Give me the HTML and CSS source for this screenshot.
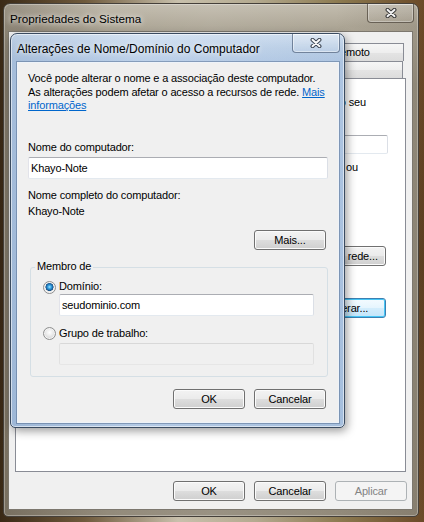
FILE: index.html
```html
<!DOCTYPE html>
<html lang="pt-BR">
<head>
<meta charset="utf-8">
<title>Propriedades do Sistema</title>
<link rel="stylesheet" href="styles.css">
</head>
<body>
<div class="desktop">

  <div class="window outer">
    <div class="titlebar">
      <span class="title">Propriedades do Sistema</span>
      <span class="close">
        <svg width="12" height="10" viewBox="0 0 12 10"><path d="M2.5 1.8 L9.5 8.2 M9.5 1.8 L2.5 8.2" stroke="#3a3a3a" stroke-width="4" stroke-linecap="round"/><path d="M2.5 1.8 L9.5 8.2 M9.5 1.8 L2.5 8.2" stroke="#f4f4f4" stroke-width="2" stroke-linecap="round"/></svg>
      </span>
    </div>
    <div class="client outer-client">
      <div class="tabs">
        <div class="tab-row back">
          <span class="tab"></span>
          <span class="tab"></span>
          <span class="tab last">Remoto</span>
        </div>
        <div class="tab-row front">
          <span class="tab selected"></span>
          <span class="tab"></span>
        </div>
      </div>
      <div class="tab-panel">
        <div class="panel-head">
          <svg class="pc-icon" width="32" height="32" viewBox="0 0 32 32"><rect x="3" y="4" width="26" height="18" rx="1.5" fill="#2b3a4d"/><rect x="5" y="6" width="22" height="14" fill="#6fb3e8"/><rect x="13" y="22" width="6" height="4" fill="#7c858f"/><rect x="8" y="26" width="16" height="2" rx="1" fill="#5d6670"/></svg>
          <p class="panel-text">identificar o seu</p>
        </div>
        <div class="desc-row">
          <span class="desc-label"></span>
          <div class="textbox small"></div>
        </div>
        <p class="example">"Computador da Cozinha" ou</p>
        <div class="action-row net-row">
          <span class="btn wide">ID de rede...</span>
        </div>
        <div class="action-row change-row">
          <span class="btn wide default">Alterar...</span>
        </div>
      </div>
      <div class="dialog-buttons outer-buttons">
        <span class="btn">OK</span>
        <span class="btn">Cancelar</span>
        <span class="btn disabled">Aplicar</span>
      </div>
    </div>
  </div>

  <div class="window inner">
    <div class="titlebar">
      <span class="title">Alterações de Nome/Domínio do Computador</span>
      <span class="close">
        <svg width="12" height="10" viewBox="0 0 12 10"><path d="M2.5 1.8 L9.5 8.2 M9.5 1.8 L2.5 8.2" stroke="#3d4654" stroke-width="4" stroke-linecap="round"/><path d="M2.5 1.8 L9.5 8.2 M9.5 1.8 L2.5 8.2" stroke="#fbfbfb" stroke-width="2" stroke-linecap="round"/></svg>
      </span>
    </div>
    <div class="client inner-client">
      <p class="intro">Você pode alterar o nome e a associação deste computador.<br>As alterações podem afetar o acesso a recursos de rede. <a class="link" href="#">Mais<br>informações</a></p>
      <div class="label name-label">Nome do computador:</div>
      <div class="textbox field">Khayo-Note</div>
      <div class="label full-label">Nome completo do computador:</div>
      <div class="label value-label">Khayo-Note</div>
      <div class="more-row"><span class="btn">Mais...</span></div>
      <fieldset class="group">
        <legend>Membro de</legend>
        <div class="radio-row"><span class="radio checked"></span><span>Domínio:</span></div>
        <div class="textbox field indent">seudominio.com</div>
        <div class="radio-row second"><span class="radio"></span><span>Grupo de trabalho:</span></div>
        <div class="textbox field indent disabled-box"></div>
      </fieldset>
      <div class="dialog-buttons inner-buttons">
        <span class="btn">OK</span>
        <span class="btn">Cancelar</span>
      </div>
    </div>
  </div>

</div>
</body>
</html>
```

FILE: styles.css
```css
* { box-sizing: border-box; }

html, body {
  margin: 0;
  padding: 0;
}

body {
  width: 424px;
  height: 522px;
  overflow: hidden;
  font-family: "Liberation Sans", Arial, sans-serif;
  font-size: 11px;
  letter-spacing: -0.15px;
  color: #000;
}

p { margin: 0; }

.desktop {
  position: relative;
  width: 424px;
  height: 522px;
  background:
    linear-gradient(180deg, rgba(40,25,10,0) 0%, rgba(40,25,10,.25) 50%, rgba(40,25,10,0) 100%),
    linear-gradient(90deg, #3a2916 0%, #6f5a3c 20%, #c8c0ac 42%, #b4aa90 60%, #8c7a50 80%, #6b4a28 100%);
}

/* ---------- windows ---------- */
.window {
  position: absolute;
  display: flex;
  flex-direction: column;
}

.outer {
  z-index: 0;
  left: 3px;
  top: 3px;
  width: 416px;
  height: 514px;
  border: 1px solid #45403a;
  border-radius: 7px 7px 5px 5px;
  background:
    linear-gradient(90deg, rgba(50,38,25,.28) 0%, rgba(50,38,25,0) 25%, rgba(255,255,255,.06) 50%, rgba(50,38,25,0) 80%, rgba(50,38,25,.12) 100%),
    linear-gradient(180deg, #c3bdaf 0px, #aea797 22px, #9c9585 80px, #938b7b 100%);
  box-shadow: inset 0 0 0 1px rgba(255,255,255,.3);
}

.inner {
  z-index: 1;
  left: 10px;
  top: 33px;
  width: 335px;
  height: 395px;
  border: 1px solid #3a4b60;
  border-radius: 7px 7px 5px 5px;
  background:
    linear-gradient(90deg, rgba(60,90,130,.12) 0%, rgba(255,255,255,.1) 40%, rgba(60,90,130,.05) 100%),
    linear-gradient(180deg, #d2e1f2 0px, #bfd3ea 14px, #b3cae6 29px, #abc4e2 100%);
  box-shadow: inset 0 0 0 1px rgba(255,255,255,.55), 2px 3px 10px rgba(0,0,0,.4);
}

.titlebar {
  display: flex;
  justify-content: space-between;
  align-items: flex-start;
  flex: none;
}

.outer .titlebar { height: 27px; padding-left: 6px; }
.inner .titlebar { height: 28px; padding-left: 6px; }

.title {
  align-self: center;
  margin-top: 1px;
  font-size: 12px;
  letter-spacing: 0;
  color: #000;
  white-space: nowrap;
  text-shadow: 0 0 5px rgba(255,255,255,.85), 0 0 9px rgba(255,255,255,.6);
}

.outer .title { font-size: 11.7px; }

.close {
  display: flex;
  align-items: center;
  justify-content: center;
  border-radius: 0 0 4px 4px;
}

.outer .close {
  width: 47px;
  height: 19px;
  margin-right: 4px;
  border: 1px solid rgba(50,42,32,.6);
  border-top: none;
  background: linear-gradient(180deg, rgba(255,255,255,.18), rgba(255,255,255,.05));
  box-shadow: inset 0 0 0 1px rgba(255,255,255,.3);
}

.inner .close {
  width: 48px;
  height: 19px;
  margin-right: 4px;
  border: 1px solid rgba(50,70,100,.6);
  border-top: none;
  background: linear-gradient(180deg, rgba(255,255,255,.35), rgba(255,255,255,.08));
  box-shadow: inset 0 0 0 1px rgba(255,255,255,.45);
}

.client {
  background: #f0f0f0;
  flex: none;
}

.outer-client {
  width: 405px;
  height: 479px;
  margin: 0 5px 6px 4px;
  border: 1px solid #7c776e;
  padding: 11px 6px 0 6px;
  display: flex;
  flex-direction: column;
}

.inner-client {
  width: 322px;
  height: 361px;
  margin: 0 5px 4px 6px;
  border: 1px solid #eef3f9;
  box-shadow: 0 0 0 1px rgba(70,95,130,.45);
  padding: 9px 11px 0 10px;
  display: flex;
  flex-direction: column;
}

/* ---------- tabs ---------- */
.tabs {
  height: 35px;
  margin-right: 2px;
  display: flex;
  flex-direction: column;
}

.tab-row {
  display: flex;
}

.tab-row.back { height: 18px; }
.tab-row.front { height: 17px; }

.tab {
  flex: 1 1 0;
  border: 1px solid #898c95;
  border-bottom: none;
  margin-right: -1px;
  background: linear-gradient(180deg, #f6f6f6 0%, #eeeeee 50%, #e4e4e4 51%, #dcdcdc 100%);
  text-align: center;
  line-height: 16px;
  white-space: nowrap;
  color: #000;
}

.tab.last {
  flex: 0 0 106px;
  margin-right: 0;
}

.tab.selected {
  flex: 0 0 221px;
  background: #fff;
}

.tab-row.front .tab:last-child { margin-right: 1px; }

.tab-panel {
  height: 394px;
  background: #fff;
  border: 1px solid #898c95;
  padding: 12px 19px 0 11px;
  display: flex;
  flex-direction: column;
}

.panel-head {
  display: flex;
  align-items: flex-start;
  justify-content: space-between;
  height: 32px;
}

.panel-text {
  margin-top: 5px;
  margin-right: 20px;
  line-height: 13.5px;
  white-space: nowrap;
}

.desc-row {
  display: flex;
  align-items: center;
  margin-top: 12px;
  margin-right: -2px;
}

.desc-label {
  width: 126px;
  flex: none;
}

.textbox {
  background: #fff;
  border: 1px solid;
  border-color: #abadb3 #dbdfe6 #e3e9ef #e2e3ea;
  border-radius: 2px;
  padding: 0 2px;
  white-space: nowrap;
}

.textbox.small {
  flex: 1;
  height: 19px;
}

.example {
  margin-top: 7px;
  margin-right: 28px;
  text-align: right;
  line-height: 13.5px;
  white-space: nowrap;
}

.action-row {
  display: flex;
  align-items: center;
  justify-content: flex-end;
  height: 32px;
}

.net-row { margin-top: 65px; }
.change-row { margin-top: 20px; }

/* ---------- buttons ---------- */
.btn {
  display: flex;
  align-items: center;
  justify-content: center;
  width: 72px;
  height: 20px;
  flex: none;
  border: 1px solid #707070;
  border-radius: 3px;
  background: linear-gradient(180deg, #f3f3f3 0%, #ebebeb 48%, #dddddd 52%, #cfcfcf 100%);
  box-shadow: inset 0 0 0 1px #fbfbfb;
  color: #000;
  white-space: nowrap;
}

.btn.wide { width: 75px; }

.btn.default {
  border-color: #3c7fb1;
  background: linear-gradient(180deg, #f4fbff 0%, #e6f5fe 48%, #d3edfc 52%, #c3e5fa 100%);
  box-shadow: inset 0 0 0 1px #46c6f6;
}

.btn.disabled {
  border-color: #adb2b5;
  background: #f4f4f4;
  box-shadow: none;
  color: #838383;
}

.dialog-buttons {
  display: flex;
  justify-content: flex-end;
  gap: 9px;
}

.outer-buttons {
  margin-top: 9px;
  margin-right: -1px;
}

.inner-buttons {
  margin-top: 12px;
  margin-right: 1px;
}

/* ---------- inner dialog content ---------- */
.intro {
  line-height: 13.5px;
  white-space: nowrap;
}

.link {
  color: #0066cc;
  text-decoration: underline;
}

.label {
  line-height: 13.5px;
  white-space: nowrap;
}

.name-label { margin-top: 28px; }
.full-label { margin-top: 10px; }
.value-label { margin-top: 2.5px; }

.textbox.field {
  height: 22px;
  line-height: 20px;
  margin-top: 2.5px;
}

.inner-client > .textbox.field { margin-right: -1px; }

.more-row {
  display: flex;
  justify-content: flex-end;
  margin-top: 12px;
  margin-right: 1px;
}

.group {
  margin: 10.25px -1px 0 2px;
  padding: 6.5px 13px 11px 12px;
  border: 1px solid #d5dfe5;
  border-radius: 3px;
  min-width: 0;
}

.group legend {
  margin-left: -8px;
  padding: 0 2px;
  line-height: 13.5px;
}

.radio-row {
  display: flex;
  align-items: center;
  gap: 3px;
  height: 13.5px;
  line-height: 13.5px;
  white-space: nowrap;
}

.radio-row.second { margin-top: 10.5px; }

.radio {
  width: 13px;
  height: 13px;
  flex: none;
  border-radius: 50%;
  border: 1px solid #8e8f8f;
  background: radial-gradient(circle at 50% 40%, #ffffff 0, #eeeeee 3px, #dcdcdc 5.5px);
  box-shadow: inset 0 0 0 1px #f4f4f4;
}

.radio.checked {
  background: radial-gradient(circle at 50% 45%, #a7e4ff 0, #3aa8e6 1.6px, #17609f 3.4px, #1e4f7d 3.9px, #e2e2e2 4.2px, #f6f6f6 5.5px);
}

.textbox.indent {
  margin-left: 16px;
  margin-top: 0.25px;
}

.textbox.disabled-box {
  margin-top: 3.25px;
  background: #f0f0f0;
  border-color: #d8d8d8 #e1e1e1 #e6e6e6 #e1e1e1;
}
```
